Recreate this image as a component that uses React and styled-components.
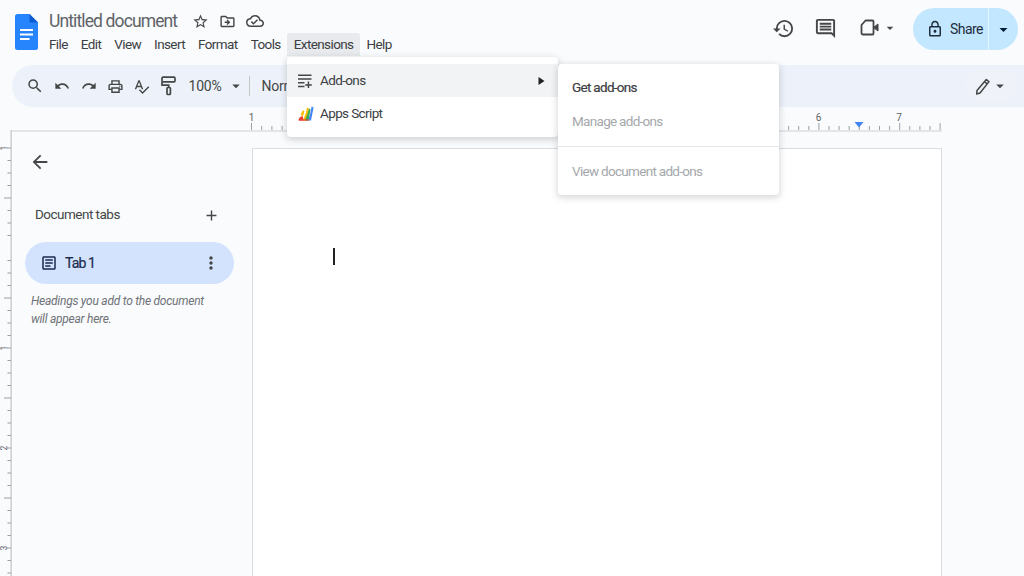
import React from "react";
import styled, { createGlobalStyle } from "styled-components";
import {
  MdOutlineStarBorder, MdOutlineDriveFileMove, MdOutlineCloudDone, MdOutlineHistory, MdOutlineComment,
  MdLockOutline, MdArrowBack, MdAdd, MdMoreVert, MdOutlineArticle,
  MdSearch, MdUndo, MdRedo, MdOutlinePrint, MdOutlineSpellcheck, MdArrowDropDown,
} from "react-icons/md";

const Global = createGlobalStyle`
  html, body { margin: 0; padding: 0; background: #f9fbfd; }
  body { font-family: Roboto, "Liberation Sans", sans-serif; overflow: hidden; }
  * { box-sizing: border-box; }
`;

const Page = styled.div`
  position: relative; width: 1024px; height: 576px; overflow: hidden; background: #f9fbfd; color: #3c4043;
  display: flex; flex-direction: column;
`;
const Header = styled.header`
  height: 65px; flex: none; display: flex; align-items: flex-start; padding: 14px 6px 0 15px;
`;
const LogoSlot = styled.div`width: 23px; height: 36px; flex: none; margin-right: 11px;`;
const TitleCol = styled.div`display: flex; flex-direction: column; margin-top: -4px;`;
const TitleRow = styled.div`display: flex; align-items: center; height: 22px; gap: 10px;`;
const Title = styled.span`font-size: 17.5px; letter-spacing: -.88px; color: #5f6368; margin-right: 5px;`;
const MenuBar = styled.nav`display: flex; gap: 13px; margin-top: 1px; height: 23px; align-items: center;`;
const MenuItem = styled.span`
  font-size: 13.5px; line-height: 23px; color: #3c4043; letter-spacing: -.6px;
  ${p => p.$active && `background: #e8eaed; margin: 0 -6.5px; padding: 0 6.5px; border-radius: 3px 3px 0 0;`}
`;
const Actions = styled.div`margin-left: auto; display: flex; align-items: center; height: 28px; color: #444746;`;
const IconSlot = styled.span`display: inline-flex; align-items: center; justify-content: center; width: ${p => p.$w || 24}px; flex: none; margin-right: ${p => p.$mr || 0}px; color: ${p => p.$c || "inherit"};`;
const Share = styled.div`
  width: 105px; height: 42px; margin: 2px 0 0 15px; background: #c2e7ff; border-radius: 21px; display: flex; align-items: center; color: #001d35;
`;
const ShareMain = styled.div`
  width: 76px; height: 100%; display: flex; align-items: center; padding-left: 13px; gap: 6px; border-right: 1px solid #e6f4ff; font-size: 14px; letter-spacing: -.55px; color: #1f2d3d;
`;
const ShareCaret = styled.div`flex: 1; display: flex; justify-content: center;`;

const Toolbar = styled.div`
  height: 42px; flex: none; margin-left: 12px; background: #edf2fa; border-radius: 21px 0 0 21px; display: flex; align-items: center; padding-left: 8px; color: #444746;
`;
const ToolIcon = styled.span`display: inline-flex; width: ${p => p.$w || 26.5}px; justify-content: center;`;
const Zoom = styled.span`font-size: 14px; margin-left: 7px; color: #444746; width: 38px; letter-spacing: -.2px;`;
const Divider = styled.span`width: 1px; height: 20px; background: #c7c7c7; margin: 0 12px 0 4px;`;
const Normal = styled.span`font-size: 14px; color: #444746; letter-spacing: -.2px;`;
const Mode = styled.div`
  margin: 0 6px 0 auto; width: 53px; height: 30px; border-radius: 15px; background: #eff3f9; display: flex; align-items: center; padding-left: 10px; color: #444746;
`;
const RulerRow = styled.div`height: 23px; flex: none; margin-left: 245px; display: block;`;
const RulerSvg = styled.svg`display: block;`;

const Main = styled.div`flex: 1; min-height: 0; display: flex; position: relative;`;
const VRuler = styled.svg`flex: none; width: 12px; height: 446px; display: block;`;
const Sidebar = styled.aside`
  flex: none; width: 240px; border-top: 2px solid #e3e5e8; padding: 0 18px 0 13px;
`;
const Back = styled.div`height: 24px; margin: 18px 0 0 4px; color: #444746; display: flex; align-items: center;`;
const TabsHead = styled.div`
  display: flex; align-items: center; justify-content: space-between; margin: 31px 0 0 10px; height: 20px; width: 185px;
  font-size: 13.5px; letter-spacing: -.52px; color: #444746;
`;
const TabsLabel = styled.span`line-height: 18px; margin-top: -2px;`;
const TabPill = styled.div`
  height: 42px; margin-top: 17px; background: #d3e3fd; border-radius: 21px; display: flex; align-items: center; padding: 0 13px 0 15px; font-size: 14px; color: #1b2a4e; letter-spacing: -.9px; width: 209px; -webkit-text-stroke: .2px #1b2a4e;
`;
const TabName = styled.span`flex: 1; margin-left: 7px;`;
const Hint = styled.p`
  margin: 8px 0 0 6px; font-size: 12px; line-height: 18px; font-style: italic; color: #6f7276; letter-spacing: -.25px; width: 190px;
`;
const DocWrap = styled.div`flex: 1; padding-top: 16px; margin-right: 82px; border-top: 2px solid #e3e5e8;`;
const Doc = styled.div`height: 600px; background: #fff; border: 1px solid #dadce0; padding: 99px 0 0 80px;`;
const Caret = styled.div`width: 2px; height: 17px; background: #222;`;

const Menu = styled.div`
  position: absolute; background: #fff; border-radius: 4px; box-shadow: 0 2px 6px 1px rgba(60,64,67,.2); z-index: 5; padding: ${p => p.$pad};
  left: ${p => p.$x}px; top: ${p => p.$y}px; width: ${p => p.$w}px;
`;
const Row = styled.div`
  height: 33px; display: flex; align-items: center; font-size: 13.5px; letter-spacing: -.62px; color: #3c4043; padding-left: 11px;
  ${p => p.$hover && "background: #f1f3f4;"}
`;
const RowIcon = styled.span`display: inline-flex; width: 18px; justify-content: flex-start; margin-right: 4px;`;
const RowLabel = styled.span`flex: 1; line-height: 18px; margin-top: -2px;`;
const SubRow = styled.div`
  height: 34px; display: flex; align-items: center; padding-left: 14px; font-size: 13.5px; letter-spacing: -.7px; color: ${p => p.$off ? "#a5a8ab" : "#3c4043"};
  ${p => !p.$off && "-webkit-text-stroke: .2px #3c4043;"}
`;
const MenuDivider = styled.div`height: 1px; background: #e4e6e8; margin: 8px 0 7px;`;

const DocsLogo = () => (
  <svg width="23" height="36" viewBox="0 0 23 36">
    <path d="M14.5 0H2.5A2.5 2.5 0 0 0 0 2.5v31A2.5 2.5 0 0 0 2.5 36h18a2.5 2.5 0 0 0 2.5-2.5V8.5z" fill="#2684fc" />
    <path d="M14.5 0v8.5H23z" fill="#0f5bd1" />
    <path d="M5 15h13v2H5zM5 19.5h13v2H5zM5 24h9.5v2H5z" fill="#fff" />
  </svg>
);
const VideoIcon = () => (
  <svg width="20" height="18" viewBox="0 0 20 18" fill="none" stroke="#444746" strokeWidth="1.8">
    <path d="M5.5 1.5h7a1 1 0 0 1 1 1v12a1 1 0 0 1-1 1H3a1.5 1.5 0 0 1-1.5-1.5V6z" strokeLinejoin="round" />
    <path d="M13.5 8.5 18 5v7z" fill="#444746" strokeWidth="1" />
  </svg>
);
const PencilIcon = () => (
  <svg width="16" height="17" viewBox="0 0 16 17" fill="none" stroke="#444746" strokeWidth="1.5" strokeLinejoin="round">
    <path d="M11.3 1.6 14 3.6 5 15 1.7 16l.3-3.4z" />
    <path d="m9.6 3.8 2.7 2" />
  </svg>
);
const AddOnsIcon = () => (
  <svg width="14" height="14" viewBox="0 0 14 14" fill="#444746">
    <path d="M0 .5h13.5v1.6H0zM0 4.2h13.5v1.6H0zM0 8h6.5v1.6H0zM0 11.7h6.5v1.6H0z" />
    <path d="M9.7 7.5h1.5v2.7h2.6v1.5h-2.6v2.3H9.7v-2.3H7.2v-1.5h2.5z" />
  </svg>
);
const SubmenuArrow = () => (
  <svg width="7" height="8" viewBox="0 0 7 8"><path d="M.5 0 6.5 4 .5 8z" fill="#202124" /></svg>
);
const RollerIcon = () => (
  <svg width="15" height="20" viewBox="0 0 15 20" fill="none" stroke="#444746" strokeWidth="1.7">
    <rect x="1" y="1.2" width="13" height="4.6" rx="1" />
    <path d="M1 5.8v3.4h6.7v2.3" />
    <rect x="6" y="11.5" width="3.4" height="7" rx="1" />
  </svg>
);
const AppsScript = () => (
  <svg width="16" height="15" viewBox="0 0 16 15">
    <path d="M.5 14.5c0-2.6 1.6-4.2 4.2-4.3l1.2 4.3z" fill="#ea4335" />
    <path d="M2.6 8.6 4.8 4.2l1.6 1L5 10.6z" fill="#fbbc04" />
    <path d="M5 14.5 8 6.5 9 1.6l2 1L8.8 14.5z" fill="#fbbc04" />
    <path d="M6.8 14.5 9.6 8 11 2.6l1.5.7-2 11.2z" fill="#34a853" />
    <path d="M10.3 14.5 12.6 6 13.6.4l2 1-2.6 13.1z" fill="#4285f4" />
    <path d="M1 13.4h10v1.2H1z" fill="#ea4335" />
  </svg>
);

const HRuler = () => {
  const ticks = [];
  for (let i = 0; i <= 4; i++) ticks.push(<path key={"a" + i} d={`M${6.5 + i * 10.2} ${i === 0 ? 16 : 19}V23`} stroke="#9aa0a6" />);
  for (let i = 0; i <= 16; i++) ticks.push(<path key={"b" + i} d={`M${533.5 + i * 10.1} ${i % 8 === 0 || i === 4 || i === 12 ? 16 : 19}V23`} stroke="#9aa0a6" />);
  return (
    <RulerSvg width="779" height="23">
      {ticks}
      <text x="6.5" y="14" fontSize="10" textAnchor="middle" fill="#5f6368" fontFamily="Roboto">1</text>
      <text x="573.5" y="14" fontSize="10" textAnchor="middle" fill="#5f6368" fontFamily="Roboto">6</text>
      <text x="654" y="14" fontSize="10" textAnchor="middle" fill="#5f6368" fontFamily="Roboto">7</text>
      <path d="M609.5 15h9l-4.5 5.5z" fill="#4285f4" />
    </RulerSvg>
  );
};

const VerticalRuler = () => {
  const ticks = [];
  for (let i = 0; i < 36; i++) {
    const y = 18 + i * 12.5;
    const major = i % 8 === 0;
    const half = i % 4 === 0;
    if (major) continue;
    ticks.push(<path key={i} d={`M${half ? 4 : 7.5} ${y}H11`} stroke="#9aa0a6" />);
  }
  const labels = [[1, 18], [1, 218], [2, 318], [3, 418]];
  return (
    <VRuler viewBox="0 0 12 446">
      <path d="M11.2 0V446" stroke="#cfd1d4" strokeWidth="1.6" />
      {ticks}
      {labels.map(([n, y]) => (
        <g key={y}>
          <path d={`M7 ${y}H11`} stroke="#9aa0a6" />
          <text transform={`translate(7 ${y}) rotate(-90)`} fontSize="8.5" textAnchor="middle" fill="#5f6368" fontFamily="Roboto">{n}</text>
        </g>
      ))}
    </VRuler>
  );
};

export default function App() {
  return (
    <Page>
      <Global />
      <Header>
        <LogoSlot><DocsLogo /></LogoSlot>
        <TitleCol>
          <TitleRow>
            <Title>Untitled document</Title>
            <MdOutlineStarBorder size={17} color="#444746" />
            <MdOutlineDriveFileMove size={17} color="#444746" />
            <MdOutlineCloudDone size={18} color="#444746" />
          </TitleRow>
          <MenuBar>
            {["File", "Edit", "View", "Insert", "Format", "Tools"].map(m => <MenuItem key={m}>{m}</MenuItem>)}
            <MenuItem $active>Extensions</MenuItem>
            <MenuItem>Help</MenuItem>
          </MenuBar>
        </TitleCol>
        <Actions>
          <IconSlot $w={24} $mr={18}><MdOutlineHistory size={23} /></IconSlot>
          <IconSlot $w={24} $mr={21}><MdOutlineComment size={23} /></IconSlot>
          <IconSlot $w={24}><VideoIcon /></IconSlot>
          <IconSlot $w={16}><MdArrowDropDown size={18} /></IconSlot>
          <Share>
            <ShareMain><MdLockOutline size={18} /><span>Share</span></ShareMain>
            <ShareCaret><MdArrowDropDown size={19} /></ShareCaret>
          </Share>
        </Actions>
      </Header>
      <Toolbar>
        <ToolIcon $w={29}><MdSearch size={18} /></ToolIcon>
        <ToolIcon><MdUndo size={16} /></ToolIcon>
        <ToolIcon><MdRedo size={16} /></ToolIcon>
        <ToolIcon><MdOutlinePrint size={17} /></ToolIcon>
        <ToolIcon><MdOutlineSpellcheck size={17} /></ToolIcon>
        <ToolIcon><RollerIcon /></ToolIcon>
        <Zoom>100%</Zoom>
        <MdArrowDropDown size={18} />
        <Divider />
        <Normal>Normal</Normal>
        <Mode><PencilIcon /><MdArrowDropDown size={18} /></Mode>
      </Toolbar>
      <RulerRow><HRuler /></RulerRow>
      <Main>
        <VerticalRuler />
        <Sidebar>
          <Back><MdArrowBack size={22} /></Back>
          <TabsHead><TabsLabel>Document tabs</TabsLabel><MdAdd size={17} /></TabsHead>
          <TabPill>
            <MdOutlineArticle size={18} color="#1b2a4e" />
            <TabName>Tab 1</TabName>
            <MdMoreVert size={20} color="#444746" />
          </TabPill>
          <Hint>Headings you add to the document will appear here.</Hint>
        </Sidebar>
        <DocWrap><Doc><Caret /></Doc></DocWrap>
      </Main>
      <Menu $x={287} $y={57} $w={271} $pad="7px 0">
        <Row $hover>
          <RowIcon><AddOnsIcon /></RowIcon>
          <RowLabel>Add-ons</RowLabel>
          <IconSlot $w={16} $mr={9}><SubmenuArrow /></IconSlot>
        </Row>
        <Row>
          <RowIcon><AppsScript /></RowIcon>
          <RowLabel>Apps Script</RowLabel>
        </Row>
      </Menu>
      <Menu $x={558} $y={64} $w={221} $pad="6px 0 7px">
        <SubRow>Get add-ons</SubRow>
        <SubRow $off>Manage add-ons</SubRow>
        <MenuDivider />
        <SubRow $off>View document add-ons</SubRow>
      </Menu>
    </Page>
  );
}
